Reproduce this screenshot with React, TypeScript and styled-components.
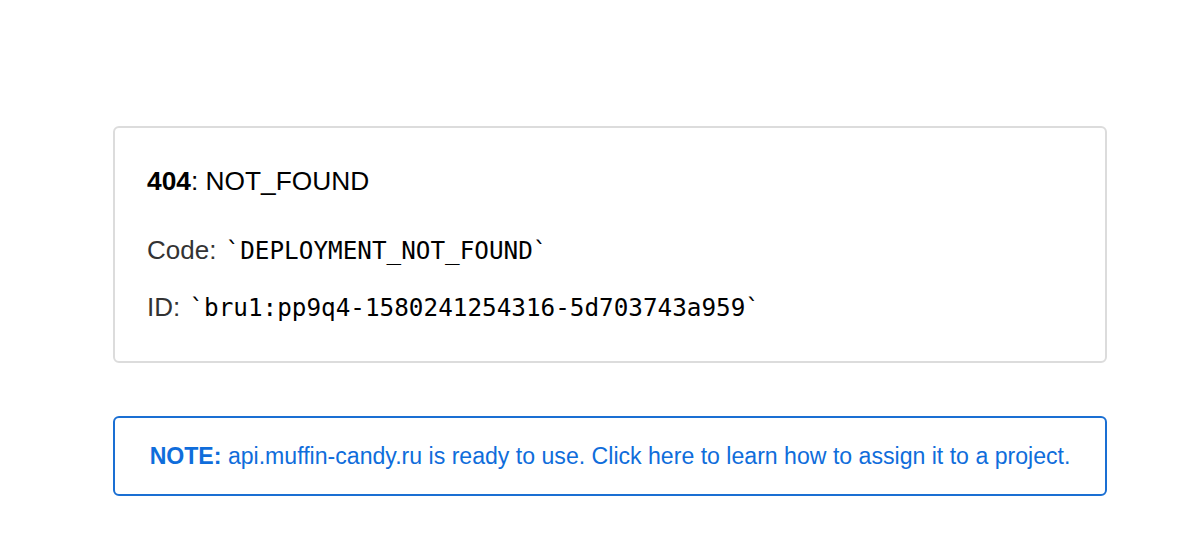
import React from "react";
import styled, { createGlobalStyle } from "styled-components";

const Global = createGlobalStyle`
  html, body { margin: 0; padding: 0; background: #fff; }
  body { font-family: "Liberation Sans", Arial, sans-serif; }
`;

const Page = styled.main`
  width: 994px;
  margin: 126px 0 0 113px;
  display: flex;
  flex-direction: column;
  gap: 53px;
`;

const Card = styled.section`
  box-sizing: border-box;
  border: 2px solid #dcdcdc;
  border-radius: 6px;
  padding: 37px 32px 36px;
  display: flex;
  flex-direction: column;
`;

const Heading = styled.h1`
  margin: 0 0 36px;
  font-size: 26.3px;
  font-weight: 400;
  line-height: 32px;
  color: #000;
  b { font-weight: 700; }
`;

const Line = styled.p`
  margin: 0 0 22px;
  font-size: 26px;
  line-height: 34px;
  color: #333;
  &:last-child { margin-bottom: 0; }
`;

const Mono = styled.code`
  font-family: "DejaVu Sans Mono", monospace;
  font-size: 24.3px;
  margin-left: 2px;
  color: #000;
`;

const Note = styled.a`
  box-sizing: border-box;
  display: block;
  border: 2px solid #1a6fd3;
  border-radius: 6px;
  padding: 23px 20px 23px;
  text-align: center;
  font-size: 23.1px;
  line-height: 30px;
  color: #0f6ddb;
  text-decoration: none;
  b { font-weight: 700; }
`;

export default function App() {
  return (
    <>
      <Global />
      <Page>
        <Card>
          <Heading>
            <b>404</b>: NOT_FOUND
          </Heading>
          <Line>
            Code: <Mono>`DEPLOYMENT_NOT_FOUND`</Mono>
          </Line>
          <Line>
            ID: <Mono>`bru1:pp9q4-1580241254316-5d703743a959`</Mono>
          </Line>
        </Card>
        <Note href="#">
          <b>NOTE:</b> api.muffin-candy.ru is ready to use. Click here to learn how to assign it to a project.
        </Note>
      </Page>
    </>
  );
}
